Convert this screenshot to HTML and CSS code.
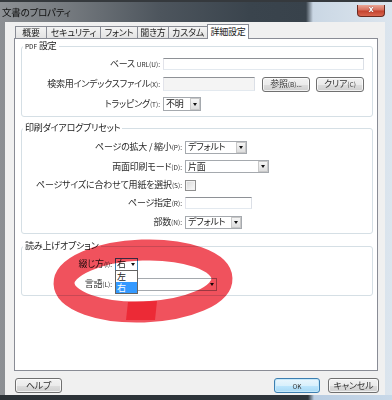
FILE: index.html
```html
<!DOCTYPE html>
<html lang="ja">
<head>
<meta charset="utf-8">
<title>文書のプロパティ</title>
<link rel="stylesheet" href="styles.css">
</head>
<body>
<div class="window">
  <div class="titlebar">
    <span class="title">文書のプロパティ</span>
    <span class="close">x</span>
  </div>
  <div class="client">
    <div class="tabs">
      <div class="tab t1">概要</div>
      <div class="tab t2">セキュリティ</div>
      <div class="tab t3">フォント</div>
      <div class="tab t4">聞き方</div>
      <div class="tab t5">カスタム</div>
      <div class="tab t6 active">詳細設定</div>
    </div>
    <div class="panel">
      <fieldset class="group g-pdf">
        <legend><span class="s">PDF</span> 設定</legend>
        <div class="grid c-pdf">
          <div class="lbl">ベース <span class="s">URL(U):</span></div>
          <div class="input url"></div>
          <div class="lbl">検索用インデックスファイル<span class="s">(X):</span></div>
          <div class="ctl"><div class="input idx"></div><div class="btn ref">参照<span class="s">(B)...</span></div><div class="btn clr">クリア<span class="s">(C)</span></div></div>
          <div class="lbl">トラッピング<span class="s">(T):</span></div>
          <div class="select trap"><span class="val">不明</span><i class="arr"></i></div>
        </div>
      </fieldset>
      <fieldset class="group g-print">
        <legend>印刷ダイアログプリセット</legend>
        <div class="grid c-print">
          <div class="lbl">ページの拡大 / 縮小<span class="s">(P):</span></div>
          <div class="select scale"><span class="val">デフォルト</span><i class="arr"></i></div>
          <div class="lbl">両面印刷モード<span class="s">(D):</span></div>
          <div class="select duplex"><span class="val">片面</span><i class="arr"></i></div>
          <div class="lbl">ページサイズに合わせて用紙を選択<span class="s">(S):</span></div>
          <div class="check"></div>
          <div class="lbl">ページ指定<span class="s">(R):</span></div>
          <div class="input pages"></div>
          <div class="lbl">部数<span class="s">(N):</span></div>
          <div class="select copies"><span class="val">デフォルト</span><i class="arr"></i></div>
        </div>
      </fieldset>
      <fieldset class="group g-read">
        <legend>読み上げオプション</legend>
        <div class="grid c-read">
          <div class="lbl">綴じ方<span class="s">(I):</span></div>
          <div class="select bind"><span class="val">右</span><i class="tri"></i>
            <div class="dropdown">
              <div>左</div>
              <div class="sel">右</div>
            </div>
          </div>
          <div class="lbl">言語<span class="s">(L):</span></div>
          <div class="select lang"><span class="val"></span><i class="tri"></i></div>
        </div>
      </fieldset>
    </div>
    <div class="buttons">
      <div class="btn help">ヘルプ</div>
      <div class="btn ok"><span class="s">OK</span></div>
      <div class="btn cancel">キャンセル</div>
    </div>
  </div>
  <svg class="mark" width="392" height="400" viewBox="0 0 392 400">
    <ellipse cx="143" cy="281" rx="79" ry="31" fill="none" stroke="#f0525d" stroke-width="21" transform="rotate(-2 143 281)"/>
    <polygon points="128,302 157,301 155,320 126,320" fill="#ec2a36"/>
  </svg>
</div>
</body>
</html>
```
FILE: styles.css
```css
* { box-sizing: border-box; }
html, body { margin: 0; padding: 0; }
body {
  width: 392px;
  height: 400px;
  overflow: hidden;
  background: #3a444d;
  font-family: "Noto Sans CJK JP", "Noto Sans", sans-serif;
  font-size: 9px;
  line-height: 12px;
  letter-spacing: -0.2px;
  color: #222;
  font-feature-settings: "palt" 1;
}
.window {
  position: relative;
  width: 392px;
  height: 400px;
  border-top: 2px solid #35393d;
  display: flex;
  flex-direction: column;
  background:
    linear-gradient(to right, #2c3237 0, #2e353b 308px, #b9cde2 314px, #c8d8e8 392px) left bottom / 100% 5px no-repeat,
    linear-gradient(to right, #8d9094 0, #74797e 70px, #4d555d 160px, #3a444d 250px, #38424b 306px, #cad7e4 313px, #dce5ee 392px);
}
.titlebar { height: 20px; display: flex; align-items: flex-start; }
.title { padding-left: 2px; line-height: 21px; color: #101010; font-size: 9.5px; }
.close {
  margin-left: auto;
  margin-right: 7px;
  margin-top: 3px;
  width: 28px;
  height: 12px;
  border: 1px solid #6b2a20;
  border-top: none;
  border-radius: 0 0 4px 4px;
  background: linear-gradient(#eaa696, #d8705e 45%, #c4432f 55%, #d9664f);
  color: #fff;
  font-family: "DejaVu Sans", sans-serif;
  font-weight: bold;
  font-size: 8px;
  line-height: 10px;
  text-align: center;
  text-shadow: 0 0 1px #400;
}
.client {
  margin: 0 7px 0 5px;
  height: 373px;
  background: #f0f0f0;
  display: flex;
  flex-direction: column;
}
.tabs { display: flex; align-items: flex-end; height: 14px; margin: 2px 0 0 10px; }
.tab {
  height: 12px;
  border: 1px solid #898c95;
  border-bottom: none;
  margin-right: -1px;
  background: linear-gradient(#f3f3f3, #e3e3e3);
  text-align: center;
  line-height: 11px;
  white-space: nowrap;
}
.tab.active { height: 15px; margin-bottom: -1px; background: #fff; position: relative; z-index: 1; line-height: 13px; }
.t1 { width: 32px; } .t2 { width: 55px; } .t3 { width: 38px; }
.t4 { width: 32px; } .t5 { width: 40px; } .t6 { width: 42px; }
.panel {
  margin: 0 7px 0 9px;
  height: 333px;
  border: 1px solid #898c95;
  background: #fff;
  padding: 1px 4px 0 6px;
}
.group { border: 1px solid #d5dfe5; border-radius: 3px; margin: 0; padding: 0; min-width: 0; }
.group legend { padding: 0 2px; margin-left: 1px; line-height: 12px; }
.g-print { margin-top: 5px; }
.g-read { margin-top: 6px; }
.grid { display: grid; column-gap: 3px; align-items: center; justify-items: start; }
.c-pdf { grid-template-columns: 138px 1fr; grid-auto-rows: 20px; padding: 2px 0; }
.c-print { grid-template-columns: 160px 1fr; grid-template-rows: 20px 19px 18px 18px 20px; padding: 3px 0 1px; }
.c-read { grid-template-columns: 90px 1fr; grid-auto-rows: 20px; padding: 2px 0 1px; }
.lbl { justify-self: end; white-space: nowrap; color: #2a2a2a; }
.s { font-size: 6.5px; letter-spacing: 0; }
.ctl { display: flex; align-items: center; }
.input {
  height: 12px;
  border: 1px solid;
  border-color: #8e9196 #dbdfe6 #e3e9ef #e2e3ea;
  background: #fff;
}
.url { width: 201px; }
.idx { width: 92px; height: 14px; background: #f4f4f4; }
.pages { width: 67px; }
.btn {
  height: 15px;
  border: 1px solid #707070;
  border-radius: 3px;
  background: linear-gradient(#f2f2f2 0, #ebebeb 50%, #dddddd 51%, #cfcfcf 100%);
  box-shadow: inset 0 0 0 1px rgba(255, 255, 255, 0.7);
  display: flex;
  align-items: center;
  justify-content: center;
  white-space: nowrap;
  color: #333;
}
.ref { width: 48px; margin-left: 7px; }
.clr { width: 48px; margin-left: 6px; }
.select {
  display: flex;
  align-items: center;
  height: 14px;
  border: 1px solid #a5a9ae;
  background: #fff;
  padding-left: 2px;
  position: relative;
  white-space: nowrap;
}
.arr {
  margin-left: auto;
  align-self: stretch;
  width: 10px;
  border: 1px solid #c8c8c8;
  background: linear-gradient(#f6f6f6, #dedede);
  display: flex;
  align-items: center;
  justify-content: center;
}
.arr::after, .tri::after {
  content: "";
  border-left: 2.5px solid transparent;
  border-right: 2.5px solid transparent;
  border-top: 3px solid #111;
}
.tri { margin-left: auto; width: 8px; display: flex; justify-content: center; }
.trap { width: 38px; }
.scale { width: 62px; height: 13px; }
.duplex { width: 84px; height: 13px; }
.copies { width: 57px; height: 13px; }
.check {
  width: 11px;
  height: 11px;
  border: 1px solid #8f8f8f;
  background: linear-gradient(135deg, #d8d8d8, #fbfbfb);
  box-shadow: inset 0 0 0 1px #f2f2f2;
}
.bind { width: 23px; height: 13px; padding-left: 1px; border-color: #3c7fb1; }
.lang { width: 102px; height: 13px; }
.dropdown {
  position: absolute;
  left: -1px;
  top: 11px;
  width: 23px;
  border: 1px solid #646464;
  background: #fff;
  z-index: 2;
}
.dropdown div { height: 11px; line-height: 11px; padding-left: 1px; }
.dropdown .sel { background: #3399ff; color: #fff; }
.buttons { display: flex; margin: 7px 6px 0 10px; }
.help { width: 47px; }
.ok {
  width: 46px;
  margin-left: auto;
  border-color: #3c7fb1;
  background: linear-gradient(#eaf6fd, #d9f0fc 50%, #bee6fd 51%, #a7d9f5);
  box-shadow: inset 0 0 0 1px #c5e8fa;
}
.cancel { width: 51px; margin-left: 8px; }
.mark { position: absolute; left: 0; top: -2px; pointer-events: none; mix-blend-mode: multiply; }
```
